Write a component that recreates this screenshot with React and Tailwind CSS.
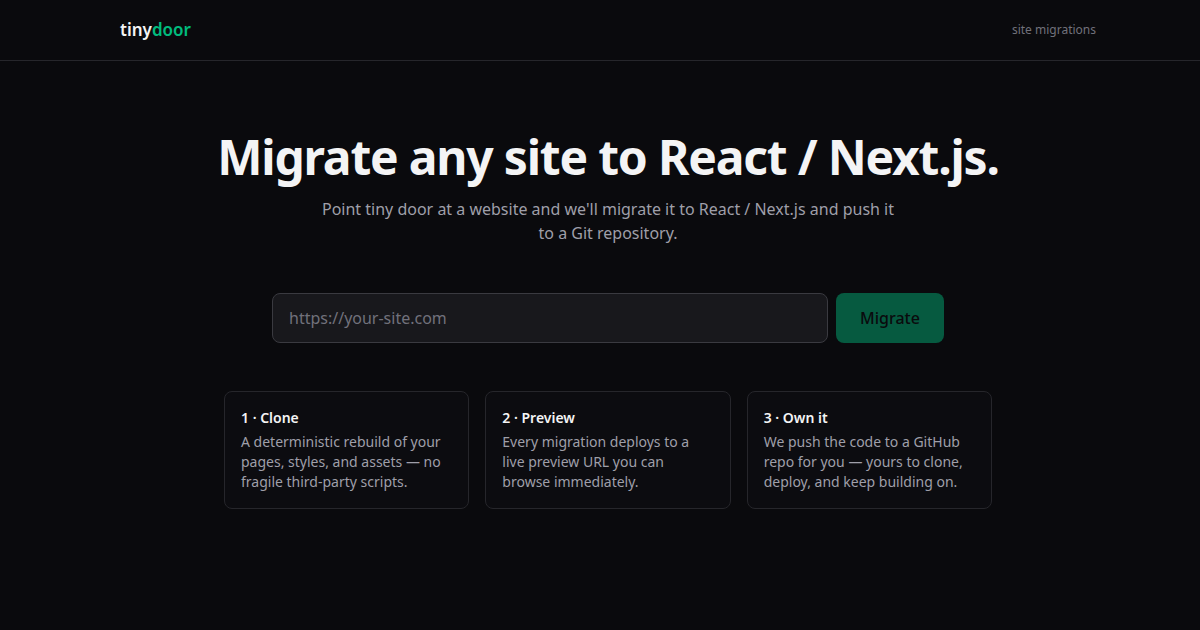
import React, { useState } from 'react';

const steps = [
  {
    title: '1 · Clone',
    body: 'A deterministic rebuild of your pages, styles, and assets — no fragile third-party scripts.',
  },
  {
    title: '2 · Preview',
    body: 'Every migration deploys to a live preview URL you can browse immediately.',
  },
  {
    title: '3 · Own it',
    body: 'We push the code to a GitHub repo for you — yours to clone, deploy, and keep building on.',
  },
];

const App = () => {
  const [url, setUrl] = useState('');

  return (
    <div
      className="min-h-screen w-full bg-[#0a0a0d] text-zinc-100 pl-4"
      style={{ fontFamily: '"Noto Sans", "Open Sans", sans-serif' }}
    >
      {/* Header */}
      <header className="border-b border-[#26262b] -ml-4 pl-4">
        <div className="mx-auto flex h-[60px] max-w-[976px] items-center justify-between">
          <span className="text-[17px] font-semibold">
            <span className="text-zinc-100">tiny</span>
            <span className="text-emerald-500">door</span>
          </span>
          <span className="text-xs text-zinc-500">site migrations</span>
        </div>
      </header>

      <main className="flex flex-col items-center pt-[72px] text-center">
        <h1 className="text-5xl font-bold leading-none tracking-tight text-zinc-100">
          Migrate any site to React / Next.js.
        </h1>
        <p className="mt-4 max-w-[580px] text-base leading-6 text-zinc-400">
          Point tiny door at a website and we'll migrate it to React / Next.js and push it to a Git repository.
        </p>

        <form
          className="mt-12 flex w-full max-w-[672px] gap-2"
          onSubmit={(e) => e.preventDefault()}
        >
          <input
            value={url}
            onChange={(e) => setUrl(e.target.value)}
            placeholder="https://your-site.com"
            className="h-[50px] flex-1 rounded-lg border border-[#3a3a40] bg-[#18181c] px-4 text-base text-zinc-100 placeholder:text-zinc-500 outline-none"
          />
          <button
            type="submit"
            className="h-[50px] w-[108px] rounded-lg bg-[#065a40] text-base font-medium text-[#0a0a0d]"
          >
            Migrate
          </button>
        </form>

        <div className="mt-12 grid w-full max-w-3xl grid-cols-3 gap-4 text-left">
          {steps.map((step, i) => (
            <div key={i} className="rounded-lg border border-[#26262b] bg-[#0c0c10] p-4">
              <p className="text-sm font-semibold leading-5 text-zinc-100">{step.title}</p>
              <p className="mt-1 text-sm leading-5 text-zinc-400">{step.body}</p>
            </div>
          ))}
        </div>
      </main>
    </div>
  );
};

export default App;
